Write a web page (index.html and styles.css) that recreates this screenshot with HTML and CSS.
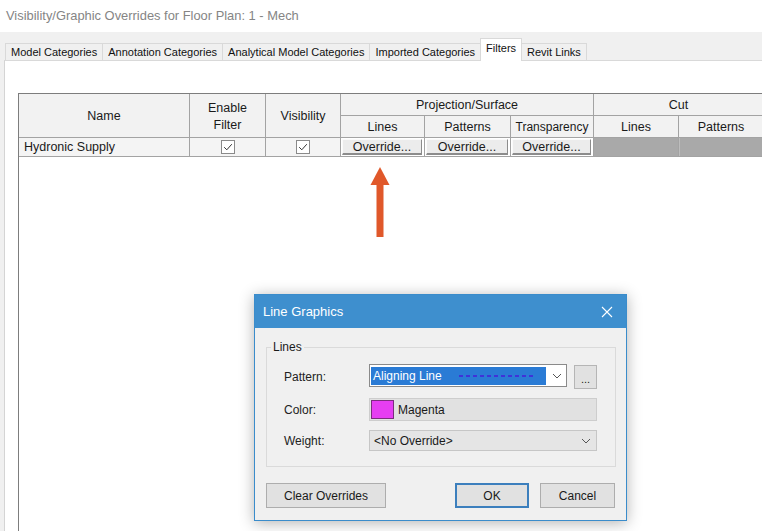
FILE: index.html
```html
<!DOCTYPE html>
<html lang="en">
<head>
<meta charset="utf-8">
<title>Visibility/Graphic Overrides</title>
<link rel="stylesheet" href="styles.css">
</head>
<body>
<div class="app">
  <div class="caption">Visibility/Graphic Overrides for Floor Plan: 1 - Mech</div>
  <div class="window">
    <div class="tabs">
      <div class="tab">Model Categories</div>
      <div class="tab">Annotation Categories</div>
      <div class="tab">Analytical Model Categories</div>
      <div class="tab">Imported Categories</div>
      <div class="tab active">Filters</div>
      <div class="tab">Revit Links</div>
    </div>
    <div class="pane">
      <div class="grid-wrap">
        <table class="filters">
          <colgroup>
            <col class="c-name"><col class="c-enable"><col class="c-vis"><col class="c-lines"><col class="c-pat"><col class="c-trans"><col class="c-clines"><col class="c-cpat">
          </colgroup>
          <thead>
            <tr class="h1">
              <th rowspan="2">Name</th>
              <th rowspan="2" class="two">Enable<br>Filter</th>
              <th rowspan="2">Visibility</th>
              <th colspan="3">Projection/Surface</th>
              <th colspan="2">Cut</th>
            </tr>
            <tr class="h2">
              <th>Lines</th>
              <th>Patterns</th>
              <th class="trans">Transparency</th>
              <th>Lines</th>
              <th>Patterns</th>
            </tr>
          </thead>
          <tbody>
            <tr class="row">
              <td class="name">Hydronic Supply</td>
              <td class="chk"><span class="box"><svg width="12" height="12" viewBox="0 0 12 12"><path d="M2.2 6.2 L4.8 8.8 L9.8 3.2" fill="none" stroke="#333" stroke-width="1"/></svg></span></td>
              <td class="chk"><span class="box"><svg width="12" height="12" viewBox="0 0 12 12"><path d="M2.2 6.2 L4.8 8.8 L9.8 3.2" fill="none" stroke="#333" stroke-width="1"/></svg></span></td>
              <td class="btn-cell"><div class="ovr">Override...</div></td>
              <td class="btn-cell"><div class="ovr">Override...</div></td>
              <td class="btn-cell"><div class="ovr">Override...</div></td>
              <td class="cut"></td>
              <td class="cut"></td>
            </tr>
          </tbody>
        </table>
      </div>
    </div>
  </div>

  <svg class="arrow" width="20" height="72" viewBox="0 0 20 72">
    <polygon points="10,1 19.5,19 0.5,19" fill="#e0582a"/>
    <rect x="6.5" y="18" width="7" height="53" fill="#e0582a"/>
  </svg>

  <div class="dialog">
    <div class="dlg-title">
      <span>Line Graphics</span>
      <svg class="close" width="12" height="12" viewBox="0 0 12 12"><path d="M1 1 L11 11 M11 1 L1 11" stroke="#fff" stroke-width="1.1"/></svg>
    </div>
    <div class="dlg-body">
      <fieldset class="group">
        <legend>Lines</legend>
        <div class="form">
          <div class="lbl">Pattern:</div>
          <div class="pattern-row">
            <div class="combo">
              <div class="sel"><span>Aligning Line</span><span class="dashes"></span></div>
              <svg class="chev" width="10" height="6" viewBox="0 0 10 6"><path d="M1 1 L5 5 L9 1" fill="none" stroke="#555" stroke-width="1"/></svg>
            </div>
            <div class="more">...</div>
          </div>
          <div class="lbl">Color:</div>
          <div class="color-field"><span class="swatch"></span><span>Magenta</span></div>
          <div class="lbl">Weight:</div>
          <div class="weight">
            <span>&lt;No Override&gt;</span>
            <svg class="chev" width="10" height="6" viewBox="0 0 10 6"><path d="M1 1 L5 5 L9 1" fill="none" stroke="#555" stroke-width="1"/></svg>
          </div>
        </div>
      </fieldset>
      <div class="actions">
        <div class="btn clear">Clear Overrides</div>
        <div class="btn ok">OK</div>
        <div class="btn cancel">Cancel</div>
      </div>
    </div>
  </div>
</div>
</body>
</html>
```

FILE: styles.css
```css
html, body {
  margin: 0;
  height: 100%;
  overflow: hidden;
}
body {
  font-family: "Liberation Sans", Arial, sans-serif;
  background: #f0f0f0;
  color: #1a1a1a;
}
.app {
  position: relative;
  width: 762px;
  height: 531px;
  overflow: hidden;
  display: flex;
  flex-direction: column;
}
.caption {
  flex: none;
  height: 32px;
  line-height: 32px;
  background: #fff;
  color: #858585;
  font-size: 12.9px;
  padding-left: 6px;
}
.window {
  flex: 1;
  display: flex;
  flex-direction: column;
  background: #f0f0f0;
  padding-left: 4px;
  min-height: 0;
}
.tabs {
  flex: none;
  display: flex;
  align-items: flex-end;
  height: 28px;
  padding-left: 1px;
}
.tab {
  height: 16px;
  line-height: 16px;
  font-size: 11px;
  padding: 0 5px;
  border: 1px solid #d9d9d9;
  border-bottom: none;
  margin-right: -1px;
  background: #f0f0f0;
  color: #111;
  white-space: nowrap;
}
.tab.active {
  height: 22px;
  line-height: 19px;
  background: #fff;
  position: relative;
  z-index: 1;
  margin-bottom: -1px;
}
.pane {
  flex: 1;
  min-height: 0;
  background: #fff;
  border-top: 1px solid #d9d9d9;
  border-left: 1px solid #d4d4d4;
  padding: 32px 0 0 13px;
  overflow: hidden;
}
.grid-wrap {
  height: 100%;
  border-left: 1px solid #7d7d7d;
}
.filters {
  border-collapse: separate;
  border-spacing: 0;
  table-layout: fixed;
  width: 745px;
  border-top: 1px solid #7d7d7d;
  font-size: 12.5px;
}
.c-name { width: 171px; }
.c-enable { width: 76px; }
.c-vis { width: 75px; }
.c-lines { width: 84px; }
.c-pat { width: 86px; }
.c-trans { width: 83px; }
.c-clines { width: 85px; }
.c-cpat { width: 85px; }
.filters th, .filters td {
  box-sizing: border-box;
  border-right: 1px solid #a3a3a3;
  border-bottom: 1px solid #a3a3a3;
  padding: 0;
  white-space: nowrap;
  overflow: hidden;
}
.filters th {
  background: #f2f2f2;
  font-weight: normal;
  color: #1a1a1a;
  text-align: center;
  line-height: 17px;
}
.filters th.trans { font-size: 12px; }
.filters .h1 th { height: 22px; padding-top: 2px; }
.filters .h2 th { height: 22px; padding-top: 1px; }
.filters .row td {
  height: 18px;
  background: #f4f4f4;
}
.filters td.name {
  padding-left: 5px;
  font-size: 12.5px;
}
.filters td.chk { text-align: center; line-height: 0; }
.box {
  display: inline-block;
  width: 14px;
  height: 14px;
  box-sizing: border-box;
  border: 1px solid #8a8a8a;
  background: #fff;
  vertical-align: middle;
}
.box svg { display: block; margin: 0 auto; }
.filters td.btn-cell {
  padding: 1px 2px 1px 1px;
  background: #fff;
}
.ovr {
  height: 16px;
  line-height: 15px;
  box-sizing: border-box;
  text-align: center;
  background: #ececec;
  border-top: 1px solid #fafafa;
  border-left: 1px solid #fafafa;
  border-right: 1px solid #8c8c8c;
  border-bottom: 2px solid #8c8c8c;
  font-size: 12.5px;
}
.filters td.cut {
  background: #a9a9a9;
}
.filters td.cut + td.cut {
  box-shadow: inset 1px 0 0 #bdbdbd;
}

.arrow {
  position: absolute;
  left: 370px;
  top: 166px;
}

.dialog {
  position: absolute;
  left: 254px;
  top: 294px;
  width: 373px;
  height: 227px;
  box-sizing: border-box;
  border: 1px solid #3a8ccb;
  background: #f0f0f0;
  box-shadow: 0 2px 14px rgba(0, 0, 0, 0.3);
  display: flex;
  flex-direction: column;
  font-size: 12px;
}
.dlg-title {
  flex: none;
  height: 33px;
  background: #3e8fce;
  color: #fff;
  font-size: 13px;
  display: flex;
  align-items: center;
  justify-content: space-between;
  padding: 0 13px 0 8px;
}
.dlg-body {
  padding: 11px 10px 0 11px;
}
.group {
  margin: 0;
  border: 1px solid #dadada;
  padding: 9px 18px 15px 17px;
}
.group legend {
  padding: 0 2px;
  margin-left: -13px;
  line-height: 16px;
  color: #1a1a1a;
}
.form {
  display: grid;
  grid-template-columns: 85px 1fr;
  row-gap: 9px;
  align-items: center;
}
.lbl {
  color: #222;
}
.pattern-row {
  display: flex;
  align-items: flex-start;
  gap: 7px;
  height: 25px;
}
.combo {
  flex: 1;
  height: 23px;
  box-sizing: border-box;
  border: 1px solid #8a8a8a;
  background: #fff;
  display: flex;
  align-items: center;
  padding: 1px;
}
.sel {
  width: 175px;
  height: 18px;
  background: #2a7bd5;
  color: #fff;
  display: flex;
  align-items: center;
  padding-left: 2px;
  box-sizing: border-box;
}
.dashes {
  margin-left: 17px;
  width: 74px;
  height: 2px;
  background: repeating-linear-gradient(90deg, #3f33d8 0 4px, transparent 4px 7px);
}
.combo .chev { margin-left: 6px; }
.more {
  width: 23px;
  height: 24px;
  margin-top: 1px;
  box-sizing: border-box;
  background: #e1e1e1;
  border: 1px solid #b5b5b5;
  text-align: center;
  line-height: 26px;
  font-size: 11px;
}
.color-field {
  height: 23px;
  box-sizing: border-box;
  background: #e1e1e1;
  border: 1px solid #cdcdcd;
  display: flex;
  align-items: center;
  padding-left: 1px;
  gap: 4px;
}
.swatch {
  width: 23px;
  height: 19px;
  box-sizing: border-box;
  background: #e63ef2;
  border: 1px solid #7c2c7e;
}
.weight {
  height: 21px;
  box-sizing: border-box;
  background: #e5e5e5;
  border: 1px solid #c6c6c6;
  display: flex;
  align-items: center;
  justify-content: space-between;
  padding: 0 5px 0 4px;
}
.actions {
  display: flex;
  margin-top: 16px;
  margin-right: 1px;
}
.btn {
  height: 25px;
  box-sizing: border-box;
  background: #e1e1e1;
  border: 1px solid #adadad;
  display: flex;
  align-items: center;
  justify-content: center;
}
.btn.clear { width: 120px; }
.btn.ok {
  width: 74px;
  margin-left: auto;
  border: 2px solid #3c7fbd;
}
.btn.cancel {
  width: 75px;
  margin-left: 11px;
}
```
